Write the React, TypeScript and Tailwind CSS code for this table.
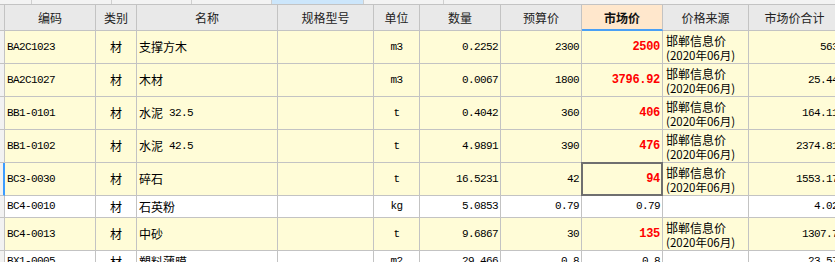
import React from "react";

type Row = {
  code: string;
  name: string;
  unit: string;
  qty: string;
  budget: string;
  market: string;
  total: string;
  changed: boolean;
  selected?: boolean;
};

const rows: Row[] = [
  { code: "BA2C1023", name: "支撑方木", unit: "m3", qty: "0.2252", budget: "2300", market: "2500", total: "563", changed: true },
  { code: "BA2C1027", name: "木材", unit: "m3", qty: "0.0067", budget: "1800", market: "3796.92", total: "25.44", changed: true },
  { code: "BB1-0101", name: "水泥 32.5", unit: "t", qty: "0.4042", budget: "360", market: "406", total: "164.11", changed: true },
  { code: "BB1-0102", name: "水泥 42.5", unit: "t", qty: "4.9891", budget: "390", market: "476", total: "2374.81", changed: true },
  { code: "BC3-0030", name: "碎石", unit: "t", qty: "16.5231", budget: "42", market: "94", total: "1553.17", changed: true, selected: true },
  { code: "BC4-0010", name: "石英粉", unit: "kg", qty: "5.0853", budget: "0.79", market: "0.79", total: "4.02", changed: false },
  { code: "BC4-0013", name: "中砂", unit: "t", qty: "9.6867", budget: "30", market: "135", total: "1307.7", changed: true },
  { code: "BX1-0005", name: "塑料薄膜", unit: "m2", qty: "29.466", budget: "0.8", market: "0.8", total: "23.57", changed: false },
];

const line = "border-r border-b border-[#c3c3c3]";
const mono = "font-['Liberation_Mono','Noto_Sans_CJK_SC',monospace] text-[11px] tracking-[-0.6px]";
const cjk = "font-['Noto_Sans_CJK_SC',sans-serif] text-[12px]";

const headers = [
  { label: "编码", w: "w-[91px]" },
  { label: "类别", w: "w-[41px]" },
  { label: "名称", w: "w-[141px]" },
  { label: "规格型号", w: "w-[96px]" },
  { label: "单位", w: "w-[46px]" },
  { label: "数量", w: "w-[81px]" },
  { label: "预算价", w: "w-[81px]" },
  { label: "市场价", w: "w-[81px]", active: true },
  { label: "价格来源", w: "w-[86px]" },
  { label: "市场价合计", w: "w-[92px]" },
];

function TopStrip() {
  const segs = [
    "w-[32px]",
    "w-[80px]",
    "w-[80px]",
    "w-[80px]",
    "w-[92px] bg-[#cce6fb]",
    "w-[80px]",
  ];
  return (
    <div className="flex h-[5px] shrink-0 border-b border-[#c3c3c3] bg-[#f3f3f3]">
      {segs.map((s, i) => (
        <div key={i} className={`h-full shrink-0 border-r border-[#cfcfcf] ${s}`} />
      ))}
    </div>
  );
}

function Header() {
  return (
    <div className="flex h-[26px] shrink-0">
      <div className={`w-[5px] shrink-0 bg-[#e9e9e9] ${line}`} />
      {headers.map((h) => (
        <div
          key={h.label}
          className={`flex shrink-0 items-center justify-center ${h.w} ${cjk} ${
            h.active
              ? "border-r border-r-[#c3c3c3] border-b-2 border-b-[#4aa0f5] bg-[#ffe7cc] pt-[1px] font-bold text-[#111]"
              : `${line} bg-[#e9e9e9] text-[#222]`
          }`}
        >
          {h.label}
        </div>
      ))}
    </div>
  );
}

function DataRow({ r }: { r: Row }) {
  const bg = r.changed ? "bg-[#fffcd7]" : "bg-white";
  const h = r.changed ? "h-[33px]" : "h-[22px]";
  return (
    <div className={`flex shrink-0 ${h} text-black`}>
      <div
        className={`w-[5px] shrink-0 bg-[#f2f2f2] border-b border-[#c3c3c3] ${
          r.selected ? "border-r-2 border-r-[#3c9cff]" : "border-r border-r-[#c3c3c3]"
        }`}
      />
      <div className={`flex w-[91px] shrink-0 items-center pl-[2px] ${bg} ${line} ${mono}`}>{r.code}</div>
      <div className={`flex w-[41px] shrink-0 items-center justify-center ${bg} ${line} ${cjk}`}>材</div>
      <div className={`flex w-[141px] shrink-0 items-center pl-[2px] ${bg} ${line} ${cjk}`}>
        {r.name.split(" ").map((part, i) =>
          i === 0 ? (
            <span key={i}>{part}</span>
          ) : (
            <span key={i} className={`ml-[6px] ${mono}`}>
              {part}
            </span>
          )
        )}
      </div>
      <div className={`w-[96px] shrink-0 ${bg} ${line}`} />
      <div className={`flex w-[46px] shrink-0 items-center justify-center ${bg} ${line} ${mono}`}>{r.unit}</div>
      <div className={`flex w-[81px] shrink-0 items-center justify-end pr-[2px] ${bg} ${line} ${mono}`}>{r.qty}</div>
      <div className={`flex w-[81px] shrink-0 items-center justify-end pr-[2px] ${bg} ${line} ${mono}`}>{r.budget}</div>
      <div
        className={`relative flex w-[81px] shrink-0 items-center justify-end pr-[2px] ${bg} ${line} ${
          r.changed
            ? "font-['Liberation_Mono',monospace] text-[12px] font-bold tracking-[-0.3px] text-[#ff0000]"
            : mono
        }`}
      >
        {r.market}
        {r.selected && <div className="absolute -inset-px border-2 border-[#6f6f6f]" />}
      </div>
      <div className={`flex w-[86px] shrink-0 flex-col justify-center pl-[3px] pt-[1px] ${bg} ${line} ${cjk}`}>
        {r.changed && (
          <>
            <span className="leading-[15px]">邯郸信息价</span>
            <span className="text-[11.5px] leading-[15px]">(2020年06月)</span>
          </>
        )}
      </div>
      <div className={`flex w-[92px] shrink-0 items-center justify-end pr-[2px] ${bg} ${line} ${mono}`}>{r.total}</div>
    </div>
  );
}

export default function App() {
  return (
    <div className="flex h-[262px] w-[835px] flex-col overflow-hidden bg-white">
      <TopStrip />
      <Header />
      {rows.map((r) => (
        <DataRow key={r.code} r={r} />
      ))}
    </div>
  );
}
